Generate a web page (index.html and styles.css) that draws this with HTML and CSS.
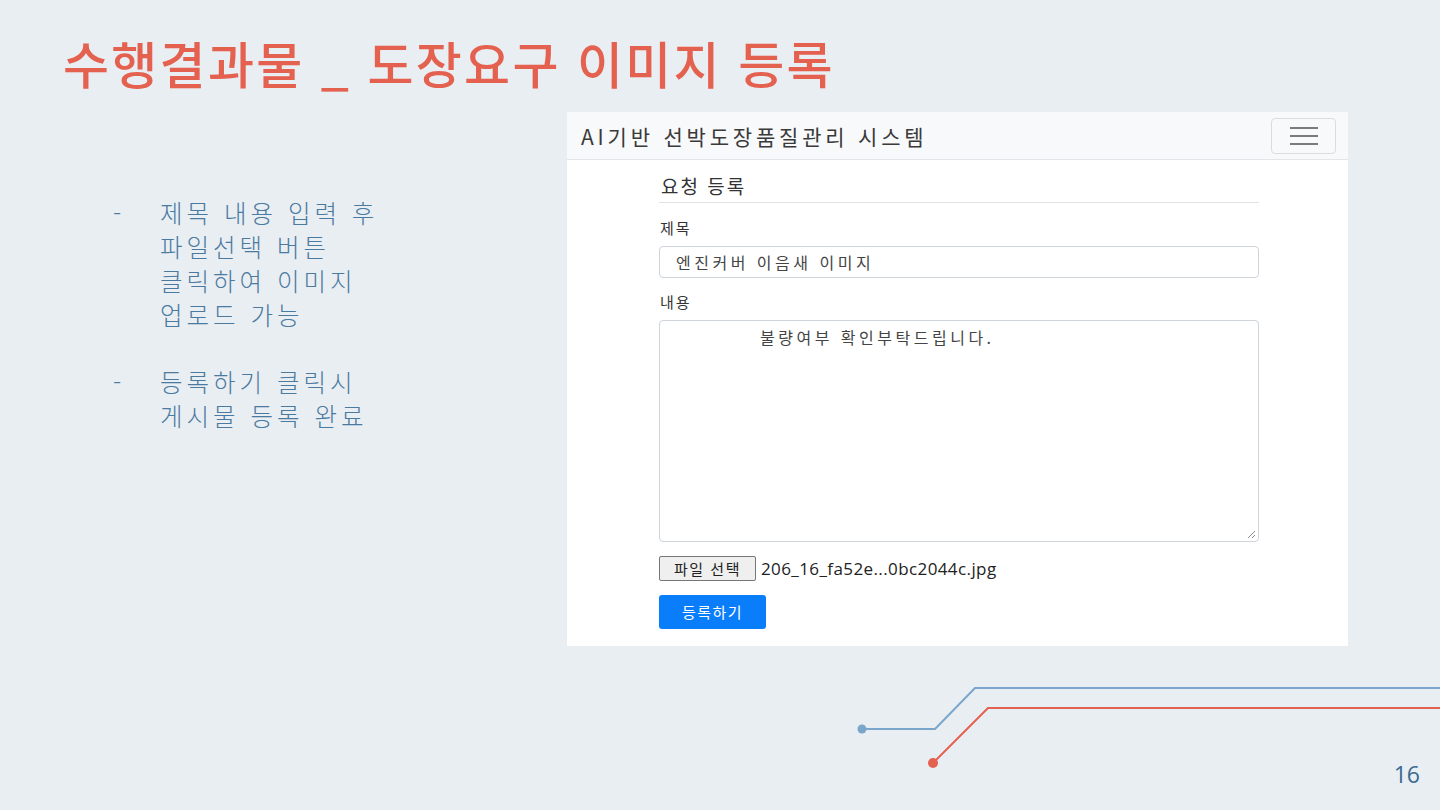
FILE: index.html
```html
<!DOCTYPE html>
<html lang="ko">
<head>
<meta charset="utf-8">
<title>수행결과물 _ 도장요구 이미지 등록</title>
<link rel="stylesheet" href="styles.css">
</head>
<body>
<div class="slide">
  <h1 class="title">수행결과물 _ 도장요구 이미지 등록</h1>
  <div class="content">
    <ul class="bullets">
      <li><span class="dash">-</span><span class="btext">제목 내용 입력 후<br>파일선택 버튼<br>클릭하여 이미지<br>업로드 가능</span></li>
      <li><span class="dash">-</span><span class="btext">등록하기 클릭시<br>게시물 등록 완료</span></li>
    </ul>
    <div class="shot">
      <div class="navbar">
        <span class="brand">AI기반 선박도장품질관리 시스템</span>
        <span class="toggler"><span></span><span></span><span></span></span>
      </div>
      <div class="form">
        <div class="form-title">요청 등록</div>
        <div class="label">제목</div>
        <div class="input">엔진커버 이음새 이미지</div>
        <div class="label label2">내용</div>
        <div class="textarea"><span class="ta-text">불량여부 확인부탁드립니다.</span>
          <svg class="grip" width="10" height="10" viewBox="0 0 10 10"><path d="M9 2 L2 9 M9 6 L6 9" stroke="#8a8a8a" stroke-width="1"/></svg>
        </div>
        <div class="file-row"><span class="file-btn">파일 선택</span><span class="file-name">206_16_fa52e...0bc2044c.jpg</span></div>
        <div class="submit">등록하기</div>
      </div>
    </div>
  </div>
  <svg class="deco" width="1440" height="810" viewBox="0 0 1440 810">
    <polyline points="862,729 935,729 975,688 1440,688" fill="none" stroke="#7aa6cb" stroke-width="2"/>
    <circle cx="862" cy="729" r="4.5" fill="#7aa6cb"/>
    <polyline points="933,763 988,708 1440,708" fill="none" stroke="#e4604f" stroke-width="2"/>
    <circle cx="933" cy="763" r="5" fill="#e4604f"/>
  </svg>
  <div class="page-num">16</div>
</div>
</body>
</html>
```
FILE: styles.css
```css
* { box-sizing: border-box; }
html, body { margin: 0; padding: 0; }
body {
  width: 1440px;
  height: 810px;
  background: #e9eef3;
  font-family: "Noto Sans CJK KR", "Noto Sans", sans-serif;
  overflow: hidden;
}
.slide {
  position: relative;
  width: 1440px;
  height: 810px;
  padding: 25px 0 0 63px;
}
.title {
  margin: 0;
  font-size: 50px;
  font-weight: 500;
  color: #e4604f;
  line-height: 74px;
  letter-spacing: 2.3px;
}
.content {
  display: flex;
  margin-top: 13px;
}
.bullets {
  list-style: none;
  margin: 84px 0 0 0;
  padding: 0 0 0 50px;
  width: 504px;
  color: #4b7aa0;
  font-size: 24.5px;
  font-weight: 300;
  line-height: 34px;
  letter-spacing: 4px;
}
.bullets li {
  display: flex;
  margin-bottom: 33px;
}
.dash {
  width: 47px;
}
.shot {
  width: 781px;
  height: 534px;
  background: #fff;
  display: flex;
  flex-direction: column;
}
.navbar {
  height: 48px;
  background: #f8f9fa;
  border-bottom: 1px solid #e3e6e9;
  display: flex;
  align-items: center;
  justify-content: space-between;
  padding: 0 12px 0 14px;
}
.brand {
  font-size: 21px;
  color: #3a3a3a;
  letter-spacing: 3.8px;
}
.toggler {
  width: 65px;
  height: 36px;
  border: 1px solid #dcdcdc;
  border-radius: 4px;
  display: flex;
  flex-direction: column;
  align-items: center;
  justify-content: center;
  gap: 6px;
}
.toggler span {
  width: 28px;
  height: 2px;
  background: #7a7a7a;
}
.form {
  width: 600px;
  margin-left: 92px;
  padding-top: 12px;
  color: #333;
}
.form-title {
  font-size: 19px;
  letter-spacing: 2px;
  line-height: 28px;
  padding-left: 2px;
  padding-bottom: 2px;
  border-bottom: 1px solid #e2e2e2;
}
.label {
  font-size: 15px;
  letter-spacing: 2px;
  margin-top: 14px;
  line-height: 22px;
  padding-left: 1px;
}
.label2 { margin-top: 13px; }
.input {
  margin-top: 7px;
  height: 32px;
  border: 1px solid #ced4da;
  border-radius: 4px;
  font-size: 16px;
  letter-spacing: 3.5px;
  color: #444;
  padding-left: 16px;
  line-height: 30px;
}
.textarea {
  position: relative;
  margin-top: 7px;
  height: 222px;
  border: 1px solid #ced4da;
  border-radius: 4px;
  font-size: 16px;
  letter-spacing: 3.5px;
  color: #444;
  padding: 4px 0 0 100px;
}
.grip {
  position: absolute;
  right: 2px;
  bottom: 2px;
}
.file-row {
  margin-top: 14px;
  display: flex;
  align-items: center;
  gap: 5px;
}
.file-btn {
  height: 25px;
  width: 97px;
  border: 1px solid #767676;
  border-radius: 2px;
  background: #efefef;
  font-size: 15px;
  letter-spacing: 1.5px;
  line-height: 23px;
  text-align: center;
  color: #222;
}
.file-name {
  font-family: "Open Sans", "Noto Sans", sans-serif;
  font-size: 17px;
  letter-spacing: 0.4px;
  color: #222;
}
.submit {
  margin-top: 14px;
  width: 107px;
  height: 34px;
  background: #0a7dfa;
  color: #fff;
  border-radius: 3px;
  font-size: 15px;
  letter-spacing: 1.5px;
  line-height: 33px;
  text-align: center;
}
.deco {
  position: absolute;
  left: 0;
  top: 0;
  pointer-events: none;
}
.page-num {
  position: absolute;
  right: 20px;
  bottom: 20px;
  font-family: "Open Sans", "Noto Sans", sans-serif;
  font-size: 23px;
  color: #3b6a91;
}
```
